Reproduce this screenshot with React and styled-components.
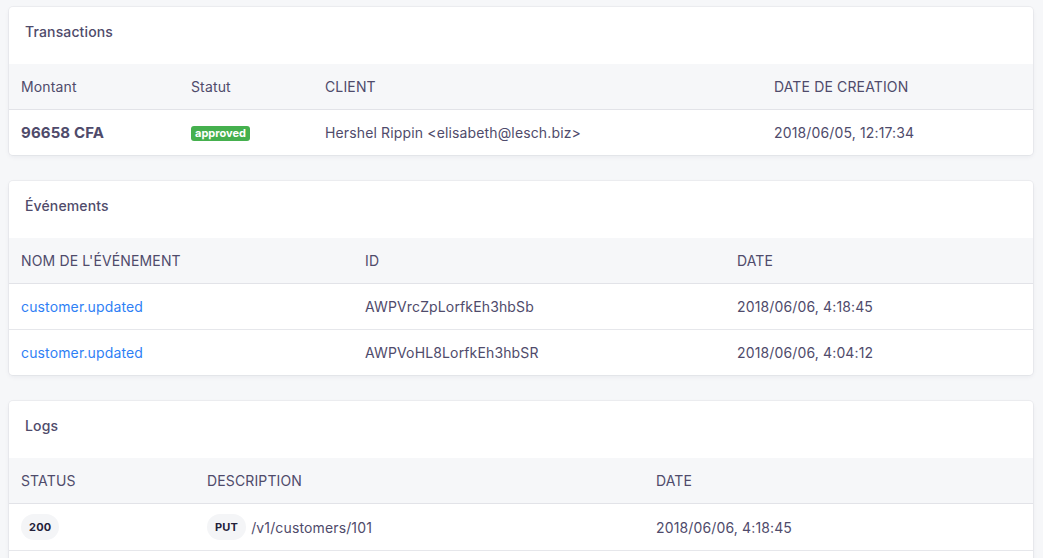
import React from "react";
import styled, { createGlobalStyle } from "styled-components";

const Global = createGlobalStyle`
  html, body { margin: 0; padding: 0; background: #f6f7f9; }
  body { font-family: Inter, "Noto Sans", sans-serif; color: #4f4b6b; font-size: 14px; letter-spacing: 0.14px; }
`;

const Page = styled.div`
  display: flex;
  flex-direction: column;
  gap: 26px;
  padding: 7px 10px 0 9px;
`;

const Card = styled.section`
  background: #fff;
  border-radius: 4px;
  box-shadow: 0 0 0 1px rgba(20, 30, 60, 0.04), 0 2px 5px rgba(20, 30, 60, 0.06);
  overflow: hidden;
`;

const CardTitle = styled.h2`
  margin: 0;
  height: 57px;
  box-sizing: border-box;
  padding: 16px 16px 0 16px;
  font-size: 14px;
  font-weight: 500;
  line-height: 17px;
  color: #4f4b6b;
`;

const Table = styled.table`
  width: 100%;
  border-collapse: collapse;
  table-layout: fixed;
`;

const Th = styled.th`
  width: ${(p) => p.$w || "auto"};
  height: 45px;
  padding: 0 12px;
  text-align: left;
  font-weight: 400;
  font-size: 14px;
  color: #4f4b6b;
  background: #f6f7f9;
  border-bottom: 1px solid #e2e3e8;
`;

const Tr = styled.tr`
  border-bottom: 1px solid #e6e7eb;
  &:last-child { border-bottom: ${(p) => (p.$open ? "1px solid #e6e7eb" : "none")}; }
`;

const Td = styled.td`
  height: ${(p) => (p.$tall ? "46px" : "45px")};
  padding: 0 12px;
  font-size: ${(p) => (p.$bold ? "15px" : "14px")};
  color: #4f4b6b;
  font-weight: ${(p) => (p.$bold ? 700 : 400)};
  white-space: nowrap;
`;

const CellLine = styled.div`
  display: flex;
  align-items: center;
  gap: 5px;
`;

const Link = styled.a`
  color: #2f7ff5;
  text-decoration: none;
`;

const StatusBadge = styled.span`
  display: inline-block;
  background: #45b04e;
  color: #fff;
  font-size: 11px;
  font-weight: 700;
  line-height: 15px;
  padding: 0 4px;
  border-radius: 3px;
  letter-spacing: 0;
  vertical-align: middle;
`;

const Pill = styled.span`
  display: inline-block;
  background: #f4f5f7;
  color: #23213a;
  font-size: 11px;
  font-weight: 700;
  line-height: 26px;
  padding: 0 8px;
  border-radius: 13px;
  letter-spacing: 0.2px;
`;

const Spacer = styled.div`
  height: 40px;
`;

export default function App() {
  return (
    <>
      <Global />
      <Page>
        <Card>
          <CardTitle>Transactions</CardTitle>
          <Table>
            <thead>
              <tr>
                <Th $w="146px">Montant</Th>
                <Th $w="110px">Statut</Th>
                <Th $w="425px">CLIENT</Th>
                <Th>DATE DE CREATION</Th>
              </tr>
            </thead>
            <tbody>
              <Tr>
                <Td $bold>96658 CFA</Td>
                <Td><StatusBadge>approved</StatusBadge></Td>
                <Td>Hershel Rippin &lt;elisabeth@lesch.biz&gt;</Td>
                <Td>2018/06/05, 12:17:34</Td>
              </Tr>
            </tbody>
          </Table>
        </Card>

        <Card>
          <CardTitle>Événements</CardTitle>
          <Table>
            <thead>
              <tr>
                <Th $w="320px">NOM DE L'ÉVÉNEMENT</Th>
                <Th $w="348px">ID</Th>
                <Th>DATE</Th>
              </tr>
            </thead>
            <tbody>
              <Tr>
                <Td><Link href="#">customer.updated</Link></Td>
                <Td>AWPVrcZpLorfkEh3hbSb</Td>
                <Td>2018/06/06, 4:18:45</Td>
              </Tr>
              <Tr>
                <Td><Link href="#">customer.updated</Link></Td>
                <Td>AWPVoHL8LorfkEh3hbSR</Td>
                <Td>2018/06/06, 4:04:12</Td>
              </Tr>
            </tbody>
          </Table>
        </Card>

        <Card>
          <CardTitle>Logs</CardTitle>
          <Table>
            <thead>
              <tr>
                <Th $w="162px">STATUS</Th>
                <Th $w="425px">DESCRIPTION</Th>
                <Th>DATE</Th>
              </tr>
            </thead>
            <tbody>
              <Tr $open>
                <Td $tall><CellLine><Pill>200</Pill></CellLine></Td>
                <Td $tall><CellLine><Pill>PUT</Pill>/v1/customers/101</CellLine></Td>
                <Td $tall>2018/06/06, 4:18:45</Td>
              </Tr>
            </tbody>
          </Table>
          <Spacer />
        </Card>
      </Page>
    </>
  );
}
